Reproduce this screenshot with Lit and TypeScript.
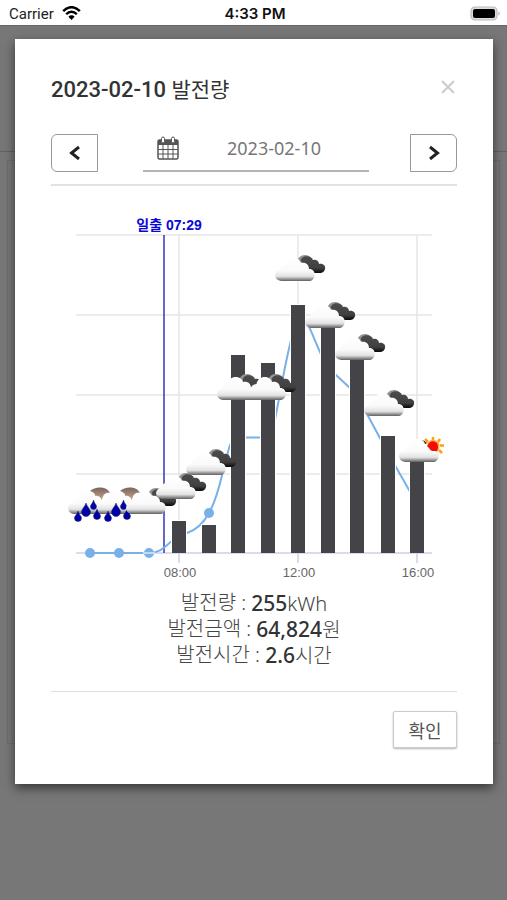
import { LitElement, html, svg, css } from "lit";
import { customElement, state } from "lit/decorators.js";

type Weather = "night-rain" | "night-cloudy" | "day-cloudy";

interface Hour {
  x: number;
  top?: number;
  weather: Weather;
  cloudX: number;
  cloudY: number;
}

const BASE = 553;

const HOURS: Hour[] = [
  { x: 90, weather: "night-rain", cloudX: 68, cloudY: 487 },
  { x: 119, weather: "night-rain", cloudX: 98, cloudY: 487 },
  { x: 149, weather: "night-cloudy", cloudX: 126, cloudY: 487 },
  { x: 179, top: 521, weather: "night-cloudy", cloudX: 156, cloudY: 472 },
  { x: 209, top: 525, weather: "night-cloudy", cloudX: 186, cloudY: 448 },
  { x: 238, top: 355, weather: "night-cloudy", cloudX: 217, cloudY: 373 },
  { x: 268, top: 363, weather: "night-cloudy", cloudX: 246, cloudY: 373 },
  { x: 298, top: 305, weather: "night-cloudy", cloudX: 275, cloudY: 254 },
  { x: 328, top: 322, weather: "night-cloudy", cloudX: 305, cloudY: 301 },
  { x: 357, top: 355, weather: "night-cloudy", cloudX: 335, cloudY: 333 },
  { x: 388, top: 436, weather: "night-cloudy", cloudX: 364, cloudY: 389 },
  { x: 417, top: 458, weather: "day-cloudy", cloudX: 399, cloudY: 435 },
];

const GRID_ROWS = [235, 315, 395, 474];
const TICKS = [
  { x: 179, label: "08:00" },
  { x: 298, label: "12:00" },
  { x: 417, label: "16:00" },
];
const MARKERS = [
  { x: 90, y: 553 },
  { x: 119, y: 553 },
  { x: 149, y: 553 },
  { x: 209, y: 513 },
];

@customElement("status-bar")
export class StatusBar extends LitElement {
  static styles = css`
    :host {
      display: grid;
      grid-template-columns: 1fr auto 1fr;
      align-items: center;
      height: 25px;
      padding: 2px 6px 0 9px;
      box-sizing: border-box;
      background: #fff;
      color: #222;
      font: 15px/20px Roboto, "Liberation Sans", sans-serif;
    }
    .carrier { display: flex; align-items: center; gap: 8px; }
    .time { color: #111; font: 600 15px/20px Inter, sans-serif; }
    .battery { justify-self: end; display: block; }
    .wifi { display: block; }
  `;
  render() {
    return html`
      <div class="carrier">
        <span>Carrier</span>
        <svg class="wifi" width="19" height="15" viewBox="0 0 19 15" fill="none" stroke="#000" aria-hidden="true">
          <path d="M1.2 5.2C6-.2 13-.2 17.8 5.2" stroke-width="2.5" />
          <path d="M4.2 8.3C7.4 4.8 11.6 4.8 14.8 8.3" stroke-width="2.4" />
          <path d="M6.4 10.7C8.2 8.8 10.8 8.8 12.6 10.7L9.5 14Z" fill="#000" stroke="none" />
        </svg>
      </div>
      <span class="time">4:33 PM</span>
      <svg class="battery" width="31" height="15" viewBox="0 0 31 15" aria-hidden="true">
        <rect x="1" y="1" width="26" height="13" rx="4" fill="#ddd" stroke="#bbb" stroke-width="1.2" />
        <rect x="3" y="3" width="22" height="9" rx="2" fill="#000" />
        <path d="M28.5 5.2Q31 7.5 28.5 9.8Z" fill="#aaa" />
      </svg>
    `;
  }
}

@customElement("generation-chart")
export class GenerationChart extends LitElement {
  static styles = css`
    :host { display: block; }
    .chart { display: block; width: 100%; height: auto; }
    .tick { font: 13px "Liberation Sans", sans-serif; fill: #666; text-anchor: middle; }
    .sunrise {
      font: bold 14px "Liberation Sans", "Noto Sans CJK KR", sans-serif;
      fill: #0a08d8;
      text-anchor: middle;
    }
  `;

  private cloud() {
    return svg`<path fill="url(#white)" d="M6 27C-1 26-2 18 4 16.500C5 13 8 11 10.500 11C12 2 24 2 26 9C31 8 34 11 34 15C42 15 41 26 35 27Z" />`;
  }

  private icon(h: Hour) {
    const move = `translate(${h.cloudX} ${h.cloudY})`;
    if (h.weather === "night-rain") {
      return svg`<g transform=${move}>
        <path fill="url(#brown)" d="M22 4C27-1 39-1 42 6C38 5 35 7 34 13H24Q31 7 22 4Z" />
        ${this.cloud()}
        <g fill="#0000a8" stroke="#20206a" stroke-width=".5">
          <path d="M18 16C19 20 22.500 22 22.500 25A4.500 4.500 0 0 1 13.500 25C13.500 22 17 20 18 16Z" />
          <path d="M25.500 13C26 16 28.500 17.500 28.500 19.500A3 3 0 0 1 22.500 19.500C22.500 17.500 25 16 25.500 13Z" />
          <path d="M10 24C10.500 27 13.500 29 13.500 31A3.500 3.500 0 0 1 6.500 31C6.500 29 9.500 27 10 24Z" />
          <path d="M29 22C29.500 25 32.500 27 32.500 29A3.500 3.500 0 0 1 25.500 29C25.500 27 28.500 25 29 22Z" />
        </g>
      </g>`;
    }
    if (h.weather === "day-cloudy") {
      return svg`<g transform=${move}>
        <path fill="#333" d="M18 7Q24 3 28 8L25 11H20Z" />
        ${this.cloud()}
        <path
          d="M34 2V5M41 4L39 7M26 4L29 7M41 10.500H45M40 15L43 18"
          fill="none" stroke="#ff9c1c" stroke-width="2.500"
        />
        <path fill="#ffb030" d="M28 8Q34 1 40 8Q42 13 38 17L30 13Z" />
        <path fill="#f40a08" d="M31 7Q35 5 38 8Q40 12 38 16H33Q31 15 30 13L28 11Z" />
      </g>`;
    }
    return svg`<g transform=${move}>
      <path fill="url(#moon)" d="M22 9C22 3 28-1 34 2L38 5L32 5Q28 4 25 10Z" />
      <path fill="url(#dark)" d="M27 4C30 1 36 2 38 6C41 5 44 7 44 10C48 9 51 12 50 15C49 19 46 19 44 19H38C36 19 35 17 34 16C30 15 29 13 29 11C26 9 25 6 27 4Z" />
      ${this.cloud()}
    </g>`;
  }

  render() {
    return html`
      <svg class="chart" viewBox="51 205 406 380" role="img" aria-label="시간별 발전량">
        <defs>
          <linearGradient id="white" x1="0" y1="0" x2="0" y2="1">
            <stop offset="0" stop-color="#fff" />
            <stop offset=".55" stop-color="#fafafa" />
            <stop offset=".8" stop-color="#e2e2e2" />
            <stop offset=".9" stop-color="#a0a0a0" />
            <stop offset="1" stop-color="#606060" />
          </linearGradient>
          <linearGradient id="dark" x1="0" y1="0" x2="0" y2="1">
            <stop offset="0" stop-color="#4c4c4c" />
            <stop offset=".7" stop-color="#404040" />
            <stop offset="1" stop-color="#080808" />
          </linearGradient>
          <linearGradient id="moon" x1="0" y1="0" x2="1" y2="1">
            <stop offset="0" stop-color="#aaa" />
            <stop offset="1" stop-color="#555" />
          </linearGradient>
          <linearGradient id="brown" x1="0" y1="0" x2="0" y2="1">
            <stop offset="0" stop-color="#77655c" />
            <stop offset="1" stop-color="#c9a48c" />
          </linearGradient>
        </defs>
        <g stroke="#e6e6e6" stroke-width="1.500">
          ${GRID_ROWS.map((y) => svg`<line x1="76" x2="432" y1=${y} y2=${y} />`)}
          ${TICKS.map((t) => svg`<line x1=${t.x} x2=${t.x} y1="235" y2=${BASE} />`)}
        </g>
        <g stroke="#ccd0ec" stroke-width="1.500">
          <line x1="76" x2="432" y1=${BASE} y2=${BASE} />
          ${TICKS.map((t) => svg`<line x1=${t.x} x2=${t.x} y1=${BASE} y2="563" />`)}
        </g>
        <line x1="164" x2="164" y1="235" y2=${BASE} stroke="#3934b8" stroke-width="1.500" />
        <path
          d="M90 553H149C160 553 164 547 172 541C177 536 181 535 187 533C196 530 203 524 209 513C219 496 222 472 227 456C231 438 234 437.500 238 437.500H268C276 437.500 284 349 298 318C304 308 314 340 320 352C325 364 328 368 336 375L350 388C357 394 362 403 367 414L388 453L417 504"
          fill="none" stroke="#78b0e8" stroke-width="2" stroke-linejoin="round"
        />
        ${MARKERS.map((m) => svg`<circle cx=${m.x} cy=${m.y} r="5" fill="#78b0e8" />`)}
        <path d="M143 553H155" stroke="#dce9f8" stroke-width="1.500" />
        ${HOURS.filter((h) => h.top !== undefined).map(
          (h) => svg`
            <rect x=${h.x - 8} y=${h.top! - 1} width="16" height=${BASE - h.top!} fill="#fff" />
            <rect x=${h.x - 7} y=${h.top!} width="14" height=${BASE - h.top!} fill="#434348" />`
        )}
        ${HOURS.map((h) => this.icon(h))}
        <text class="sunrise" x="169" y="230">일출 07:29</text>
        ${TICKS.map((t) => svg`<text class="tick" x=${t.x + 1} y="577">${t.label}</text>`)}
      </svg>
    `;
  }
}

@customElement("app-root")
export class AppRoot extends LitElement {
  @state() private date = "2023-02-10";

  static styles = css`
    :host {
      display: flex;
      flex-direction: column;
      min-height: 100vh;
      color: #444;
      font-family: "Noto Sans", "Noto Sans CJK KR", sans-serif;
    }
    .stage {
      display: grid;
      grid-template-columns: minmax(0, 1fr);
      flex: 1;
      background: #777;
    }
    .page, .overlay { grid-area: 1 / 1; }
    .page { display: flex; flex-direction: column; border-top: 1px solid #666; }
    .topbar { height: 125px; border-bottom: 1px solid #626262; }
    .panel { height: 582px; margin: 8px 7px; border: 1px solid #6d6d6d; }
    .overlay { padding: 14px 14px 40px 15px; }
    .modal {
      display: block;
      box-sizing: border-box;
      padding: 36px;
      background: #fff;
      box-shadow: 0 4px 10px rgba(0, 0, 0, 0.55);
    }
    .head { display: flex; justify-content: space-between; align-items: flex-start; height: 30px; }
    .title {
      margin: 0;
      color: #333;
      font: 500 22px/30px Roboto, "Noto Sans CJK KR", sans-serif;
    }
    .noun { font-size: 21px; font-weight: 400; }
    button { padding: 0; background: #fff; cursor: pointer; }
    .close { display: grid; place-items: center; width: 18px; height: 24px; border: 0; }
    .picker {
      display: flex;
      margin-top: 29px;
      padding-bottom: 12px;
      border-bottom: 2px solid #e2e2e2;
    }
    .step {
      display: grid;
      place-items: center;
      width: 47px;
      height: 38px;
      border: 1px solid #999;
    }
    .prev { border-radius: 6px 0 0 6px; }
    .next { border-radius: 0 6px 6px 0; }
    .field {
      display: flex;
      flex: 1;
      min-width: 0;
      align-items: center;
      margin: 0 41px 0 45px;
      padding: 0 14px 8px;
      border-bottom: 2px solid #b4b4b4;
    }
    .date {
      flex: 1;
      min-width: 0;
      padding: 0;
      border: 0;
      outline: 0;
      background: none;
      color: #777;
      font: 18px/26px "Noto Sans", sans-serif;
      text-align: center;
      margin-left: 14px;
    }
    .chart { margin-top: 19px; }
    .summary {
      margin: 5px 0 0;
      padding-bottom: 23px;
      border-bottom: 1px solid #ddd;
      font-size: 20px;
      font-weight: 300;
      line-height: 26px;
      text-align: center;
    }
    .row { display: flex; justify-content: center; height: 26px; white-space: pre; }
    dt, dd { margin: 0; }
    .value { font-size: 21px; font-weight: 500; color: #333; }
    .foot { display: flex; justify-content: flex-end; padding-top: 19px; }
    .ok {
      width: 64px;
      height: 37px;
      border: 1px solid #ccc;
      border-radius: 2px;
      box-shadow: 0 1px 2px rgba(0, 0, 0, 0.3);
      color: #555;
      font: 18px/26px "Noto Sans CJK KR", sans-serif;
    }
  `;

  private shift(days: number) {
    const d = new Date(this.date + "T00:00:00Z");
    if (Number.isNaN(d.getTime())) return;
    d.setUTCDate(d.getUTCDate() + days);
    this.date = d.toISOString().slice(0, 10);
  }

  private row(label: string, value: string, unit: string) {
    return html`<div class="row"><dt>${label} : </dt><dd><span class="value">${value}</span>${unit}</dd></div>`;
  }

  render() {
    return html`
      <status-bar></status-bar>
      <div class="stage">
        <div class="page" aria-hidden="true">
          <div class="topbar"></div>
          <div class="panel"></div>
        </div>
        <div class="overlay">
          <section class="modal" role="dialog" aria-labelledby="title">
            <header class="head">
              <h1 class="title" id="title">${this.date} <span class="noun">발전량</span></h1>
              <button class="close" aria-label="닫기">
                <svg width="14" height="14" viewBox="0 0 14 14" stroke="#ccc" stroke-width="2"><path d="M1 1L13 13M13 1L1 13" /></svg>
              </button>
            </header>
            <div class="picker">
              <button class="step prev" aria-label="이전 날짜" @click=${() => this.shift(-1)}>
                <svg width="12" height="16" viewBox="0 0 12 16" fill="none" stroke="#222" stroke-width="3"><path d="M10 2L2.500 8L10 14" /></svg>
              </button>
              <label class="field">
                <svg width="22" height="24" viewBox="0 0 22 24" fill="none" stroke="#555" aria-hidden="true">
                  <rect x="1" y="4" width="20" height="19" rx="1.500" stroke-width="1.500" />
                  <path d="M1 4H21V9H1Z" fill="#555" stroke="none" />
                  <path d="M1 13.500H21M1 18H21M6 9V23M11 9V23M16 9V23" />
                  <rect x="4.500" y="1" width="3" height="6" rx="1.500" fill="#fff" />
                  <rect x="14.500" y="1" width="3" height="6" rx="1.500" fill="#fff" />
                </svg>
                <input class="date" type="text" aria-label="날짜" .value=${this.date} />
              </label>
              <button class="step next" aria-label="다음 날짜" @click=${() => this.shift(1)}>
                <svg width="12" height="16" viewBox="0 0 12 16" fill="none" stroke="#222" stroke-width="3"><path d="M2 2L9.500 8L2 14" /></svg>
              </button>
            </div>
            <generation-chart class="chart"></generation-chart>
            <dl class="summary">
              ${this.row("발전량", "255", "kWh")}
              ${this.row("발전금액", "64,824", "원")}
              ${this.row("발전시간", "2.6", "시간")}
            </dl>
            <footer class="foot"><button class="ok">확인</button></footer>
          </section>
        </div>
      </div>
    `;
  }
}
